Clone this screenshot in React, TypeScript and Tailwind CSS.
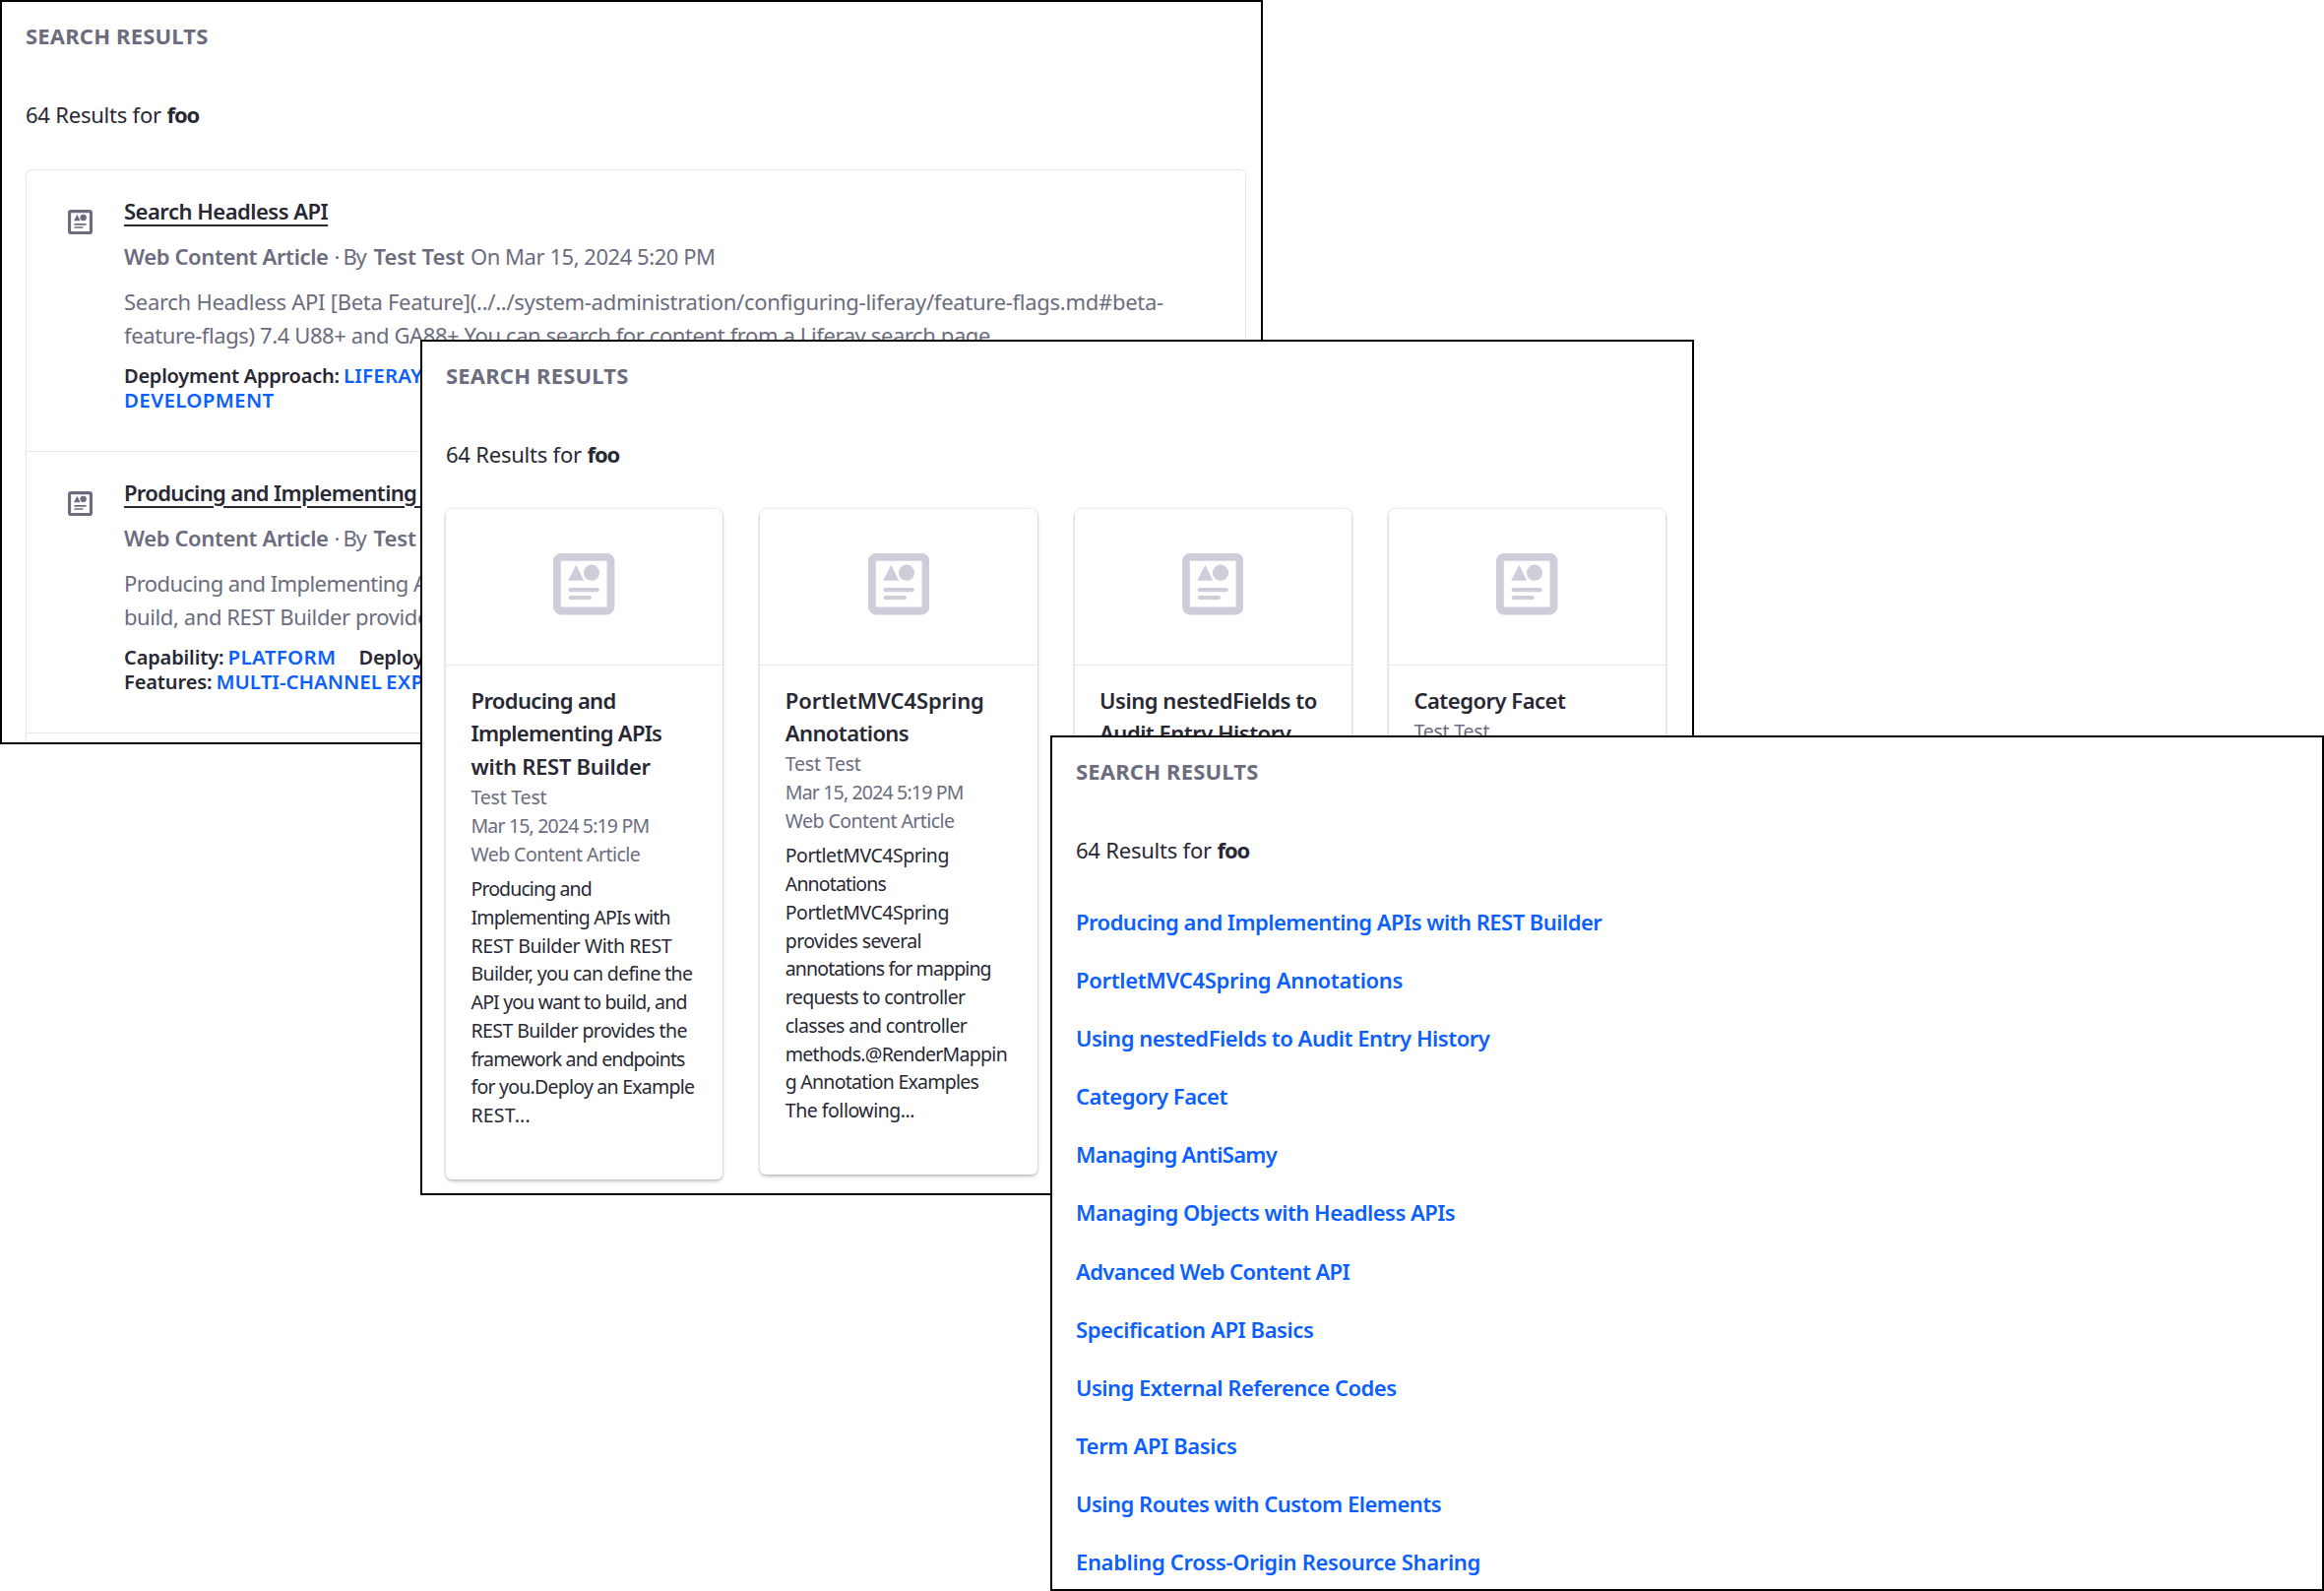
import type { ReactNode } from "react";

const FONT = '"Noto Sans"';
const ctx = document.createElement("canvas").getContext("2d")!;

type FitProps = {
  children: string;
  ink: number;
  size?: number;
  weight?: number;
  className?: string;
};

/** Text run whose tracking is computed so that its visible extent is `ink` pixels. */
function Fit({ children, ink, size = 22, weight = 400, className = "" }: FitProps) {
  ctx.font = `${weight} ${size}px ${FONT}`;
  const m = ctx.measureText(children);
  const natural = m.actualBoundingBoxRight + m.actualBoundingBoxLeft;
  const letterSpacing = (ink - natural) / (children.length - 1);
  return (
    <span
      className={`whitespace-pre ${className}`}
      style={{ fontSize: size, fontWeight: weight, letterSpacing }}
    >
      {children}
    </span>
  );
}

function WebContentIcon({ className }: { className: string }) {
  return (
    <svg viewBox="0 0 64 64" fill="currentColor" className={className} aria-hidden="true">
      <path
        fillRule="evenodd"
        d="M8 0h48a8 8 0 0 1 8 8v48a8 8 0 0 1-8 8H8a8 8 0 0 1-8-8V8a8 8 0 0 1 8-8Zm0 8v48h48V8Z"
      />
      <path d="M24 12l8 16.500H15.500Z" />
      <circle cx="40" cy="20.200" r="8.300" />
      <rect x="16" y="36" width="32" height="4.200" rx="2.100" />
      <rect x="16" y="44" width="24" height="4.200" rx="2.100" />
    </svg>
  );
}

function Panel({ className, children }: { className: string; children: ReactNode }) {
  return (
    <section
      className={`absolute overflow-hidden border-2 border-black bg-white px-6 pt-[16.5px] text-[22px] leading-[34px] text-[#272833] ${className}`}
    >
      <h2 className="flex text-[#6b6c7e]">
        <Fit ink={184.2} weight={700}>SEARCH RESULTS</Fit>
      </h2>
      <p className="mt-[46px] flex">
        <span className="w-[143.5px]">
          <Fit ink={137}>64 Results for</Fit>
        </span>
        <Fit ink={33} weight={700}>foo</Fit>
      </p>
      {children}
    </section>
  );
}

function ListItem({ title, titleInk, desc, tags }: { title: string; titleInk: number; desc: [string, number][]; tags: ReactNode }) {
  return (
    <li className="flex h-[286px] shrink-0 border-b border-[#e7e7ed] pl-[42px]">
      <WebContentIcon className="mt-10 size-[25px] shrink-0 text-[#6b6c7e]" />
      <div className="ml-8 flex flex-col pt-[23.5px] text-[#6b6c7e]">
        <a className="text-[#272833] underline decoration-2 underline-offset-[5px]">
          <Fit ink={titleInk} weight={600}>{title}</Fit>
        </a>
        <p className="mt-3 flex">
          <span className="w-[208px]"><Fit ink={207} weight={600}>Web Content Article</Fit></span>
          <span className="w-[45.5px] pl-[5.5px]"><Fit ink={33}>· By</Fit></span>
          <span className="w-[98.500px]"><Fit ink={92.5} weight={600}>Test Test</Fit></span>
          <Fit ink={246}>On Mar 15, 2024 5:20 PM</Fit>
        </p>
        <div className="mt-3 flex flex-col">
          {desc.map(([t, w]) => <Fit key={t} ink={w}>{t}</Fit>)}
        </div>
        <div className="mt-3 flex flex-col text-xl leading-[25px] text-[#272833]">{tags}</div>
      </div>
    </li>
  );
}

type Line = [string, number];
type CardData = { title: Line[]; body: Line[] };

function Card({ title, body }: CardData) {
  return (
    <article className="w-[281.300px] shrink-0 rounded-md bg-white shadow-[0_2px_4px_-1px_rgba(0,0,0,0.35),0_0_3px_rgba(0,0,0,0.12)]">
      <div className="flex h-[159px] items-center justify-center border-b border-[#e7e7ed] pb-[5px]">
        <WebContentIcon className="size-[62.400px] text-[#cdced9]" />
      </div>
      <div className="flex flex-col pt-[18.500px] pr-4 pb-[50.5px] pl-[25.5px]">
        <h3 className="flex flex-col leading-[33.700px]">
          {title.map(([t, w]) => <Fit key={t} ink={w} weight={600}>{t}</Fit>)}
        </h3>
        <div className="-mt-[0.5px] flex flex-col leading-[29px] text-[#6b6c7e]">
          <Fit ink={77} size={19.5}>Test Test</Fit>
          <Fit ink={178.9} size={19.5}>Mar 15, 2024 5:19 PM</Fit>
          <Fit ink={171.3} size={19.5}>Web Content Article</Fit>
        </div>
        <div className="mt-[7px] flex flex-col leading-[28.750px]">
          {body.map(([t, w], i) => <Fit key={i} ink={w} size={19.5}>{t}</Fit>)}
        </div>
      </div>
    </article>
  );
}

const CARDS: CardData[] = [
  {
    title: [["Producing and", 146], ["Implementing APIs", 193.6], ["with REST Builder", 183]],
    body: [
      ["Producing and", 121.2],
      ["Implementing APIs with", 202],
      ["REST Builder With REST", 203.3],
      ["Builder, you can define the", 223.5],
      ["API you want to build, and", 218.9],
      ["REST Builder provides the", 218],
      ["framework and endpoints", 217.6],
      ["for you.Deploy an Example", 226.4],
      ["REST...", 58],
    ],
  },
  {
    title: [["PortletMVC4Spring", 200.3], ["Annotations", 125]],
    body: [
      ["PortletMVC4Spring", 164.6],
      ["Annotations", 102.7],
      ["PortletMVC4Spring", 164.6],
      ["provides several", 136.8],
      ["annotations for mapping", 208.8],
      ["requests to controller", 182.2],
      ["classes and controller", 184],
      ["methods.@RenderMappin", 223.9],
      ["g Annotation Examples", 195.7],
      ["The following...", 130.5],
    ],
  },
  { title: [["Using nestedFields to", 219.6], ["Audit Entry History", 195.6]], body: [] },
  { title: [["Category Facet", 153.6]], body: [] },
];

const LINKS: Line[] = [
  ["Producing and Implementing APIs with REST Builder", 534.3],
  ["PortletMVC4Spring Annotations", 330.5],
  ["Using nestedFields to Audit Entry History", 420.8],
  ["Category Facet", 153.4],
  ["Managing AntiSamy", 203.8],
  ["Managing Objects with Headless APIs", 382.8],
  ["Advanced Web Content API", 278.5],
  ["Specification API Basics", 240],
  ["Using External Reference Codes", 324.2],
  ["Term API Basics", 162.9],
  ["Using Routes with Custom Elements", 369.7],
  ["Enabling Cross-Origin Resource Sharing", 408.5],
];

export default function App() {
  return (
    <main className="relative h-[1616px] w-[2361px] overflow-hidden bg-white font-['Noto_Sans',sans-serif]">
      <Panel className="top-0 left-0 h-[756px] w-[1283px]">
        <ul className="mt-[39.500px] flex w-[1240px] flex-col rounded-md border border-[#e7e7ed]">
          <ListItem
            title="Search Headless API"
            titleInk={206.5}
            desc={[
              ["Search Headless API [Beta Feature](../../system-administration/configuring-liferay/feature-flags.md#beta-", 1055],
              ["feature-flags) 7.4 U88+ and GA88+ You can search for content from a Liferay search page", 880],
            ]}
            tags={
              <>
                <div className="flex">
                  <span className="w-[223px]"><Fit ink={217.5} size={20} weight={600}>Deployment Approach:</Fit></span>
                  <Fit ink={80} size={20.5} weight={600} className="text-[#0b5fff]">LIFERAY</Fit>
                </div>
                <Fit ink={151.5} size={20.5} weight={600} className="text-[#0b5fff]">DEVELOPMENT</Fit>
              </>
            }
          />
          <ListItem
            title="Producing and Implementing APIs with REST Builder"
            titleInk={528}
            desc={[
              ["Producing and Implementing APIs", 335],
              ["build, and REST Builder provides", 319],
            ]}
            tags={
              <>
                <div className="flex">
                  <span className="w-[105.500px]"><Fit ink={100} size={20} weight={600}>Capability:</Fit></span>
                  <span className="w-[133px]"><Fit ink={107.5} size={20.5} weight={600} className="text-[#0b5fff]">PLATFORM</Fit></span>
                  <Fit ink={217} size={20} weight={600}>Deployment Approach:</Fit>
                </div>
                <div className="flex">
                  <span className="w-[93.500px]"><Fit ink={88} size={20} weight={600}>Features:</Fit></span>
                  <span className="w-[172.500px]"><Fit ink={167.3} size={20.5} weight={600} className="text-[#0b5fff]">MULTI-CHANNEL</Fit></span>
                  <Fit ink={125} size={20.5} weight={600} className="text-[#0b5fff]">EXPERIENCE</Fit>
                </div>
              </>
            }
          />
          <li className="h-20" />
        </ul>
      </Panel>

      <Panel className="top-[345px] left-[427px] h-[869px] w-[1294px]">
        <div className="mt-[39.500px] flex items-start gap-[38px]">
          {CARDS.map((c) => <Card key={c.title[0][0]} {...c} />)}
        </div>
      </Panel>

      <Panel className="top-[747px] left-[1067px] h-[869px] w-[1294px]">
        <ul className="mt-[27px] flex flex-col leading-[59.180px] text-[#0b5fff]">
          {LINKS.map(([t, w]) => (
            <li key={t} className="flex h-[59.180px]">
              <Fit ink={w} weight={600}>{t}</Fit>
            </li>
          ))}
        </ul>
      </Panel>
    </main>
  );
}
